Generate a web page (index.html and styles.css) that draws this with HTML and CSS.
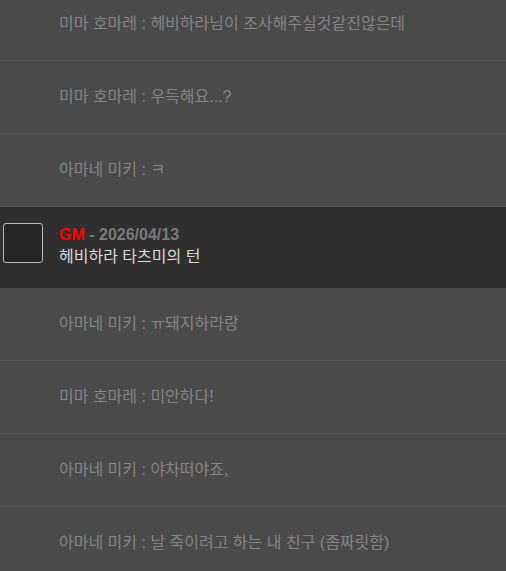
FILE: index.html
```html
<!DOCTYPE html>
<html lang="ko">
<head>
<meta charset="utf-8">
<link rel="stylesheet" href="styles.css">
</head>
<body>
<div class="list">
  <div class="row">미마 호마레 : 헤비하라님이 조사해주실것같진않은데</div>
  <div class="row">미마 호마레 : 우득해요...?</div>
  <div class="row">아마네 미키 : ㅋ</div>
  <div class="row gm">
    <div class="avatar"></div>
    <div class="body">
      <div class="meta"><span class="name">GM</span> - 2026/04/13</div>
      <div class="msg">헤비하라 타츠미의 턴</div>
    </div>
  </div>
  <div class="row">아마네 미키 : ㅠ돼지하라랑</div>
  <div class="row">미마 호마레 : 미안하다!</div>
  <div class="row">아마네 미키 : 야차떠야죠,</div>
  <div class="row">아마네 미키 : 날 죽이려고 하는 내 친구 (좀짜릿함)</div>
</div>
</body>
</html>
```
FILE: styles.css
```css
html, body {
  margin: 0;
  padding: 0;
  background: #4a4a4a;
  overflow: hidden;
}
body {
  font-family: "Liberation Sans", "Noto Sans CJK KR", sans-serif;
}
.list {
  margin-top: -12px;
}
.row {
  height: 68px;
  box-sizing: content-box;
  border-bottom: 1px solid #565656;
  display: flex;
  align-items: center;
  padding: 0 0 4px 59px;
  font-size: 16px;
  color: #858585;
}
.row.gm {
  height: 65px;
  border-bottom: none;
  background: #2f2f2f;
  padding: 16px 0 0 3px;
  align-items: flex-start;
  gap: 16px;
}
.avatar {
  width: 38px;
  height: 38px;
  border: 1px solid #b8b8b8;
  border-radius: 3px;
  background: #262626;
}
.body {
  display: flex;
  flex-direction: column;
  gap: 3px;
  padding-top: 2px;
}
.meta {
  font-size: 16px;
  font-weight: bold;
  color: #7a7a7a;
  line-height: 19px;
}
.name {
  color: #ff0000;
}
.msg {
  font-size: 16px;
  color: #dadada;
  line-height: 19px;
}
```
